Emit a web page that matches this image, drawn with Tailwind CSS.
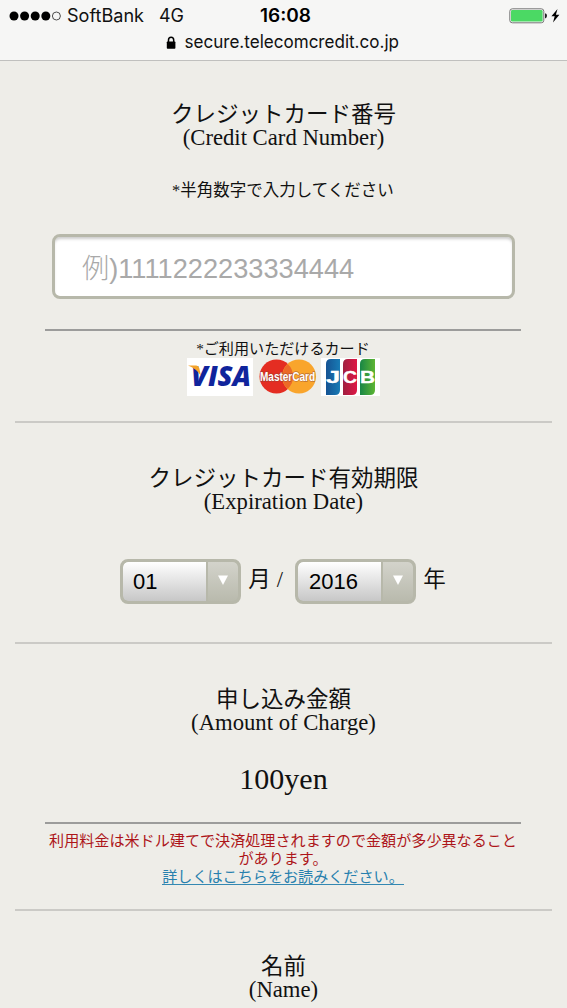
<!DOCTYPE html>
<html lang="ja">
<head>
<meta charset="utf-8">
<title>Credit card payment</title>
<script src="https://cdn.jsdelivr.net/npm/@tailwindcss/browser@4"></script>
</head>
<body class="h-[1008px] w-[567px] overflow-hidden bg-[#eeede8] font-['Noto_Sans_CJK_JP',sans-serif] text-[#111]">
<header class="h-[61px] border-b border-[#c0c0be] bg-[#f6f6f5] font-['Inter','Liberation_Sans',sans-serif] text-black">
  <div class="grid h-8 grid-cols-3 items-center">
    <div class="flex items-center pl-[9px]">
      <svg class="h-[10px] w-[53px]" viewBox="0 0 53 10"><g><circle cx="5" cy="5" r="4.5"/><circle cx="15.6" cy="5" r="4.5"/><circle cx="26.2" cy="5" r="4.5"/><circle cx="36.8" cy="5" r="4.5"/><circle cx="47.4" cy="5" r="4" fill="none" stroke="#222" stroke-width=".8"/></g></svg>
      <svg class="h-8 w-[125px] shrink-0" viewBox="0 0 125 32"><g font-size="18" fill="#111"><text x="5" y="22" textLength="77" lengthAdjust="spacingAndGlyphs">SoftBank</text><text x="97" y="22" textLength="25" lengthAdjust="spacingAndGlyphs">4G</text></g></svg>
    </div>
    <svg class="h-8 w-[189px]" viewBox="0 0 189 32"><text x="71" y="22" font-size="18" font-weight="600" textLength="51" lengthAdjust="spacingAndGlyphs">16:08</text></svg>
    <div class="flex items-center justify-end pr-[6px]">
      <svg class="h-4 w-[53px]" viewBox="0 0 53 16"><rect x="1.8" y=".8" width="34" height="14" rx="2.5" fill="#f6f6f5" stroke="#777" stroke-width="1"/><rect x="3" y="2" width="31.6" height="11.6" rx="1.3" fill="#4bd964"/><path d="M37 5.2q2 .3 2 2.6t-2 2.6z" fill="#222"/><path d="M49.5 1 43.4 8.2h3.3L45 14.6l6.4-7.8h-3.5z"/></svg>
    </div>
  </div>
  <div class="flex h-[22px] items-center pl-[165px]">
    <svg class="h-[14px] w-[12px]" viewBox="0 0 12 14"><rect x="1.8" y="5.6" width="8.6" height="7.2" rx=".7"/><path d="M3.5 6V4a2.6 2.8 0 0 1 5.2 0v2" fill="none" stroke="#000" stroke-width="1.5"/></svg>
    <svg class="h-[22px] w-[230px] overflow-visible" viewBox="0 0 230 22"><text x="7.5" y="16" font-size="18" fill="#111" textLength="214.5" lengthAdjust="spacingAndGlyphs">secure.telecomcredit.co.jp</text></svg>
  </div>
</header>
<main class="mx-[15px] text-center">
  <section class="h-[362px] border-b-2 border-[#cbcac6] pt-[39px]">
    <h2 class="h-[26px] text-[22.5px] leading-6">クレジットカード番号</h2>
    <p class="h-6 font-['Liberation_Serif',serif] text-[22.7px] leading-6">(Credit Card Number)</p>
    <p class="mt-[27px] h-6 pr-[1px] text-[16.5px] leading-6"><span class="font-['Liberation_Serif',serif]">*</span>半角数字で入力してください</p>
    <div class="mx-[37px] mt-[33px] flex h-[65px] w-[463px] items-center rounded-lg border-[3px] border-[#b7b8aa] bg-white pl-[27px] text-[27.2px] leading-none text-[#a9a9a9] shadow-[inset_0_3px_3px_-1px_#ccc]"><span class="pt-[5px] font-['Liberation_Sans','Noto_Sans_CJK_JP',sans-serif]"><span class="font-light">例</span>)1111222233334444</span></div>
    <div class="mx-[30px] mt-[30px] h-[2px] w-[476px] bg-[#9c9c9b]"></div>
    <p class="mt-[6px] h-[21px] pr-[1px] text-[15.1px] leading-5"><span class="font-['Liberation_Serif',serif]">*</span>ご利用いただけるカード</p>
    <div class="flex h-[38px] pl-[172px]">
      <svg class="h-[38px] w-[66px]" viewBox="0 0 66 38"><rect width="66" height="38" fill="#fff"/><text x="4" y="28" font-family="Open Sans, sans-serif" font-size="27.5" font-weight="800" font-style="italic" fill="#10249c" textLength="60" lengthAdjust="spacingAndGlyphs">VISA</text><path d="M1 7.6h8.2q2.6 0 3.1 2.6l1.6 7.6Q9 10.5 1 7.6" fill="#f5a42b"/></svg>
      <svg class="ml-[5px] h-[38px] w-[60px] overflow-visible" viewBox="0 0 60 38"><circle cx="18.5" cy="18.5" r="17" fill="#e42d22"/><circle cx="41" cy="18.5" r="17" fill="#f9a52c"/><path d="M29.7 6a17 17 0 0 1 0 25 17 17 0 0 1 0-25" fill="#ec6a27"/><text x="2" y="23" font-family="Liberation Sans, sans-serif" font-size="12.5" font-weight="700" fill="#fff" stroke="#8a4638" stroke-width="1.4" stroke-opacity=".55" paint-order="stroke" textLength="55" lengthAdjust="spacingAndGlyphs">MasterCard</text></svg>
      <svg class="ml-[3px] h-[38px] w-[59px]" viewBox="0 0 59 38"><defs><linearGradient id="jb"><stop stop-color="#155393"/><stop offset="1" stop-color="#187bb5"/></linearGradient><linearGradient id="jr"><stop stop-color="#9f2040"/><stop offset="1" stop-color="#df1745"/></linearGradient><linearGradient id="jg"><stop stop-color="#188646"/><stop offset="1" stop-color="#5db533"/></linearGradient></defs><rect width="59" height="38" fill="#fff"/><path d="M5 6q0-5 5-5h9v31q0 5-5 5H5z" fill="url(#jb)"/><path d="M22 6q0-5 5-5h9v31q0 5-5 5h-9z" fill="url(#jr)"/><path d="M39 6q0-5 5-5h10v31q0 5-5 5H39z" fill="url(#jg)"/><g font-family="Liberation Sans, sans-serif" font-size="16" font-weight="700" fill="#fff" stroke="#fff" stroke-width=".4"><text x="5" y="25" textLength="14" lengthAdjust="spacingAndGlyphs">J</text><text x="22" y="25" textLength="14" lengthAdjust="spacingAndGlyphs">C</text><text x="39" y="25" textLength="15" lengthAdjust="spacingAndGlyphs">B</text></g></svg>
    </div>
  </section>
  <section class="h-[221px] border-b-2 border-[#cbcac6] pt-[41px]">
    <h2 class="h-[26px] text-[22.5px] leading-6">クレジットカード有効期限</h2>
    <p class="h-6 font-['Liberation_Serif',serif] text-[22.7px] leading-6">(Expiration Date)</p>
    <div class="mt-[45px] flex h-[45px] pl-[105px] text-[22.5px]">
      <div class="flex h-[45px] w-[121px] overflow-hidden rounded-lg border-[3px] border-[#b7b8aa] bg-[#b7b8aa] text-black">
        <div class="flex w-[83px] items-center rounded-l-[5px] bg-linear-to-b from-white to-[#c7c7c7] pt-px pl-[10px] font-['Liberation_Sans',sans-serif] text-[22px] leading-none">01</div>
        <div class="ml-[2px] flex flex-1 items-center justify-center rounded-r-[5px] bg-linear-to-b from-[#d3d3cb] to-[#b9baad]"><svg class="-mt-[2px] h-[11px] w-[12px]" viewBox="0 0 12 11"><path d="M1 .5h10L6 10z" fill="#fff"/></svg></div>
      </div>
      <span class="ml-[7px] w-[23px] leading-[36px]">月</span>
      <span class="ml-[5px] w-[8px] font-['Liberation_Serif',serif] leading-[42px]">/</span>
      <div class="ml-[11px] flex h-[45px] w-[121px] overflow-hidden rounded-lg border-[3px] border-[#b7b8aa] bg-[#b7b8aa] text-black">
        <div class="flex w-[83px] items-center rounded-l-[5px] bg-linear-to-b from-white to-[#c7c7c7] pt-px pl-[11px] font-['Liberation_Sans',sans-serif] text-[22px] leading-none">2016</div>
        <div class="ml-[2px] flex flex-1 items-center justify-center rounded-r-[5px] bg-linear-to-b from-[#d3d3cb] to-[#b9baad]"><svg class="-mt-[2px] h-[11px] w-[12px]" viewBox="0 0 12 11"><path d="M1 .5h10L6 10z" fill="#fff"/></svg></div>
      </div>
      <span class="ml-[7px] w-[23px] leading-[36px]">年</span>
    </div>
  </section>
  <section class="h-[267px] border-b-2 border-[#cbcac6] pt-[41px]">
    <h2 class="h-[26px] text-[22.5px] leading-6">申し込み金額</h2>
    <p class="h-6 font-['Liberation_Serif',serif] text-[22.7px] leading-6">(Amount of Charge)</p>
    <p class="mt-[26px] h-9 font-['Liberation_Serif',serif] text-[30px] leading-9">100yen</p>
    <div class="mx-[30px] mt-[25px] h-[2px] w-[476px] bg-[#9c9c9b]"></div>
    <div class="mt-[6px] pr-px text-[15.1px] leading-[18px] whitespace-nowrap text-[#ad1519]">
      <p>利用料金は米ドル建てで決済処理されますので金額が多少異なること<br>があります。</p>
      <a class="block mx-auto h-[19px] w-[242px] border-b border-[#3488b2] leading-[18px] text-[#2780ae]">詳しくはこちらをお読みください。</a>
    </div>
  </section>
  <section class="pt-[41px]">
    <h2 class="h-[26px] text-[22.5px] leading-6">名前</h2>
    <p class="h-6 font-['Liberation_Serif',serif] text-[22.7px] leading-6">(Name)</p>
  </section>
</main>
</body>
</html>
